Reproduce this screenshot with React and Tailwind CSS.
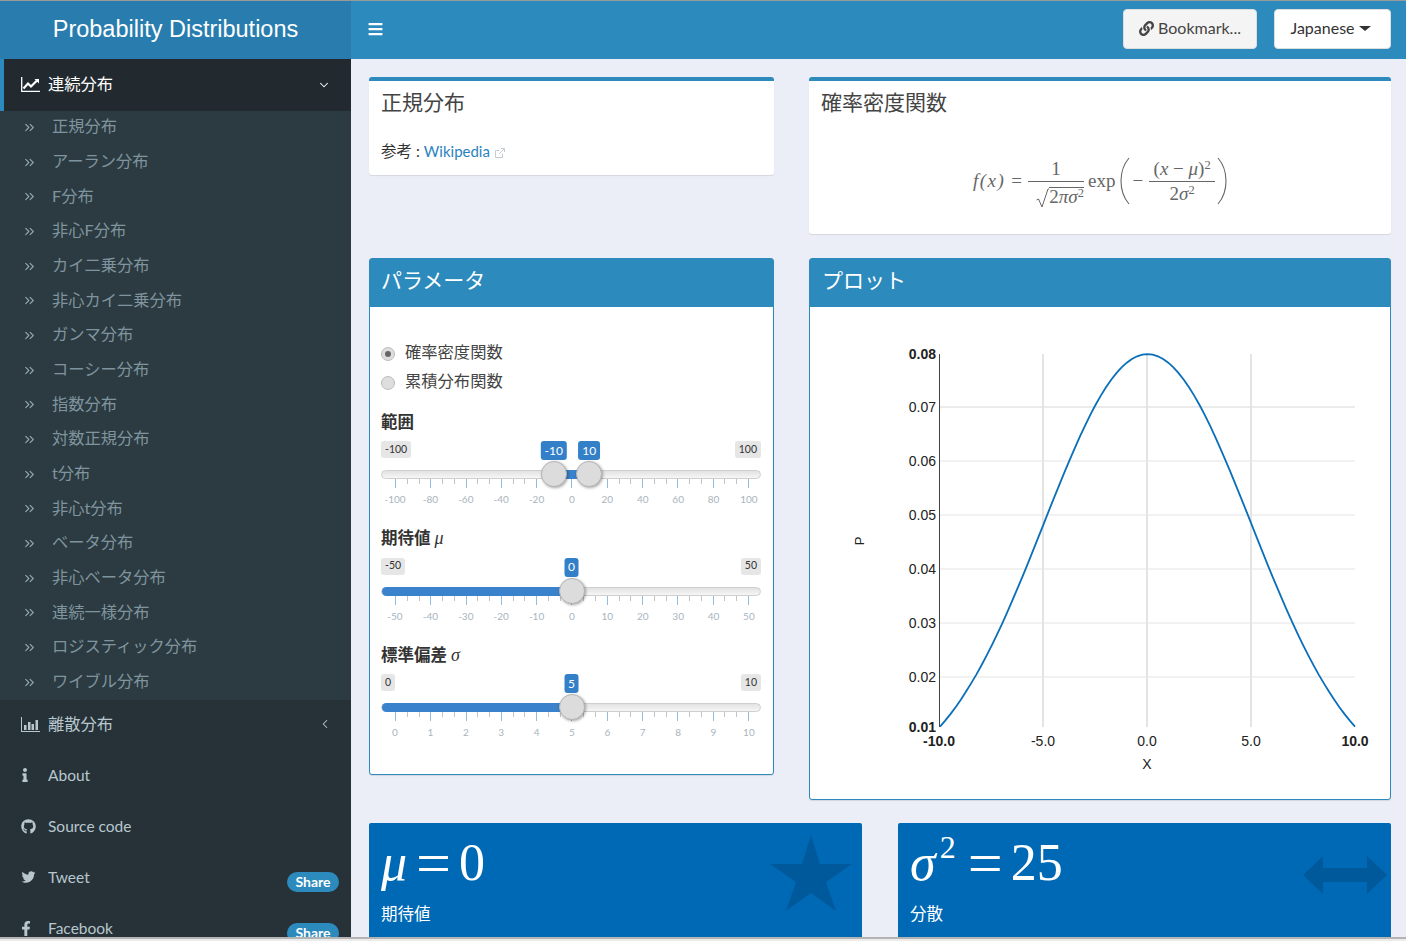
import { FaBars, FaFacebookF, FaGithub, FaInfo, FaLink, FaTwitter } from 'react-icons/fa';
import { ChevronDown, ChevronLeft, ChevronsRight } from 'lucide-react';

const distributions = [
  '正規分布', 'アーラン分布', 'F分布', '非心F分布', 'カイ二乗分布', '非心カイ二乗分布',
  'ガンマ分布', 'コーシー分布', '指数分布', '対数正規分布', 't分布', '非心t分布',
  'ベータ分布', '非心ベータ分布', '連続一様分布', 'ロジスティック分布', 'ワイブル分布',
];

function LineChartIcon() {
  return (
    <svg width="19" height="15" viewBox="0 0 19 15" fill="none" stroke="currentColor">
      <path d="M0.7 0v14.3H19" strokeWidth="1.3" />
      <path d="M2.5 11.5L7 6.5l3 3L16.5 3" strokeWidth="2.2" />
      <path d="M13.5 2h4.5v4.5z" fill="currentColor" stroke="none" />
    </svg>
  );
}

function BarChartIcon() {
  return (
    <svg width="19" height="15" viewBox="0 0 19 15" fill="currentColor">
      <path d="M0 0h1v14h18v1H0z" />
      <path d="M3 8h2.5v5H3zM7 5h2.5v8H7zM10.5 7H13v6h-2.5zM14.5 3H17v10h-2.5z" />
    </svg>
  );
}

function TreeItem({ label }) {
  return (
    <div className="h-[34.7px] flex items-center pl-[22px] pb-[4px] text-[#7f949e]">
      <ChevronsRight size={15} strokeWidth={1.8} className="mr-[15px] mt-[2px] shrink-0 text-[#93a8b2]" />
      <span className="text-[16.25px]">{label}</span>
    </div>
  );
}

function MenuItem({ icon, label, right, cjk }) {
  return (
    <div className={cjk ? 'h-[51px] flex items-center pl-[21px] pr-[12px] pb-[3px] text-[#b8c7ce]' : 'h-[51px] flex items-center pl-[21px] pr-[12px] pb-[1px] text-[#b8c7ce]'}>
      <span className="w-[27px] shrink-0">{icon}</span>
      <span className={cjk ? 'flex-1 text-[16.25px]' : 'flex-1 text-[15.5px]'}>{label}</span>
      {right}
    </div>
  );
}

function ShareBadge() {
  return (
    <span className="w-[52px] h-[20px] mt-[7px] rounded-full bg-[#2c8abd] text-white text-[14px] font-bold flex items-center justify-center">
      Share
    </span>
  );
}

function Sidebar() {
  return (
    <aside className="w-[351px] shrink-0 bg-[#263238] overflow-hidden">
      <div className="h-[52px] bg-[#222a30] border-l-4 border-[#2c8abd] flex items-center pl-[17px] pr-[20px] pb-[1px] text-white">
        <span className="w-[27px] shrink-0"><LineChartIcon /></span>
        <span className="flex-1 text-[16.25px]">連続分布</span>
        <ChevronDown size={14} strokeWidth={1.8} />
      </div>
      <div className="bg-[#2c3b41] h-[589px]">
        {distributions.map((d) => <TreeItem key={d} label={d} />)}
      </div>
      <MenuItem
        cjk
        icon={<BarChartIcon />}
        label="離散分布"
        right={<ChevronLeft size={14} strokeWidth={1.8} className="mr-[7px]" />}
      />
      <MenuItem icon={<FaInfo className="w-[8px] h-[14px] -mt-[2px]" />} label="About" />
      <MenuItem icon={<FaGithub className="w-[15px] h-[15px] -mt-[2px]" />} label="Source code" />
      <MenuItem icon={<FaTwitter className="w-[15px] h-[14px] -mt-[2px]" />} label="Tweet" right={<ShareBadge />} />
      <MenuItem icon={<FaFacebookF className="w-[10px] h-[15px] -mt-[2px]" />} label="Facebook" right={<ShareBadge />} />
    </aside>
  );
}

function Slider({ title, symbol, min, max, values, ticks }) {
  const span = max - min;
  const pos = (v) => 14 + ((v - min) / span) * 354;
  const fillLeft = values.length > 1 ? pos(values[0]) : 0;
  const fillRight = pos(values[values.length - 1]);
  return (
    <div className="mb-[21.5px]">
      <div className="h-6 mb-[7px] flex items-center text-[16.5px] font-bold text-[#333]">
        {title}
        {symbol && <i className="ml-[4px] text-[18px] font-normal font-['Liberation_Serif',serif]">{symbol}</i>}
      </div>
      <div className="relative h-[19px] mb-[10px] flex justify-between items-start text-[10.5px] text-[#333]">
        <span className="h-[17px] px-[4px] bg-[#e6e6e6] rounded-[3px] flex items-center">{min}</span>
        <span className="h-[17px] px-[4px] bg-[#e6e6e6] rounded-[3px] flex items-center">{max}</span>
        {values.map((v) => (
          <span
            key={v}
            className="absolute top-0 h-[19px] px-[4px] -translate-x-1/2 bg-[#3480c8] text-white rounded-[3px] flex items-center text-[12px]"
            style={{ left: pos(v) - 0.5 }}
          >
            {v}
          </span>
        ))}
      </div>
      <div className="relative h-[9px] rounded-full border border-[#cfcfcf] bg-gradient-to-b from-[#e2e2e2] to-[#f6f6f6]">
        <div
          className="absolute -inset-y-px bg-[#3a82cc] rounded-l-full"
          style={{ left: fillLeft, width: fillRight - fillLeft }}
        />
        {values.map((v) => (
          <div
            key={v}
            className="absolute top-[-10px] w-[26px] h-[26px] -translate-x-1/2 rounded-full bg-[#dcdcdc] border border-[#b5b5b5] shadow-[1px_1px_3px_rgba(0,0,0,0.35)]"
            style={{ left: pos(v) - 1.5 }}
          />
        ))}
      </div>
      <div className="h-[9px] ml-[14px] mr-[12px] flex justify-between items-start">
        {ticks.flatMap((t, i) => {
          const major = <span key={t} className="w-px h-[9px] bg-[#8fbce0]" />;
          if (i === ticks.length - 1) return [major];
          return [
            major,
            <span key={`${t}a`} className="w-px h-[5px] bg-[#c4c4c4]" />,
            <span key={`${t}b`} className="w-px h-[5px] bg-[#c4c4c4]" />,
          ];
        })}
      </div>
      <div className="mt-[5px] h-[12px] ml-[14px] mr-[12px] flex justify-between text-[10px] leading-[12px] text-[#a9b4be]">
        {ticks.map((t) => (
          <span key={t} className="w-0 flex justify-center">{t}</span>
        ))}
      </div>
    </div>
  );
}

function Radio({ label, checked }) {
  return (
    <div className="h-[29px] flex items-center text-[16.3px] text-[#444]">
      <span className="w-[14px] h-[14px] mt-[3px] mr-[10px] rounded-full bg-[#dedede] border border-[#bdbdbd] flex items-center justify-center">
        {checked && <span className="w-[6px] h-[6px] rounded-full bg-[#666]" />}
      </span>
      <span className="pb-[1px]">{label}</span>
    </div>
  );
}

function Paren({ flip }) {
  return (
    <svg width="10" height="48" viewBox="0 0 10 48" fill="none" stroke="#666" strokeWidth="1.1" className={flip ? '-scale-x-100' : ''}>
      <path d="M9 1C3 8 1 16 1 24s2 16 8 23" />
    </svg>
  );
}

function Formula() {
  return (
    <div className="h-[70px] mt-[32px] flex items-center justify-center text-[19px] text-[#666] font-['Liberation_Serif',serif]">
      <i className="tracking-[1.5px]">f(x)</i>
      <span className="mx-[6px]">=</span>
      <div className="flex flex-col items-center w-[56px]">
        <span className="h-[24px] leading-[24px]">1</span>
        <div className="w-full border-t border-[#666] flex justify-end items-start h-[24px]">
          <svg width="13" height="20" viewBox="0 0 13 20" fill="none" stroke="#666" className="mt-[6px] shrink-0">
            <path d="M0.5 12l2-1 3.5 8L12 1h1" strokeWidth="1" />
          </svg>
          <span className="mt-[5px] border-t border-[#666] leading-[18px] h-[19px] whitespace-nowrap">
            2<i>πσ</i><sup className="text-[12.5px]">2</sup>
          </span>
        </div>
      </div>
      <span className="ml-[4px] mr-[5px]">exp</span>
      <Paren />
      <span className="ml-[2px] mr-[6px]">−</span>
      <div className="flex flex-col items-center w-[66px]">
        <span className="h-[24px] leading-[24px] whitespace-nowrap">
          (<i>x</i> − <i>μ</i>)<sup className="text-[12.5px]">2</sup>
        </span>
        <span className="w-full border-t border-[#666] h-[24px] leading-[24px] text-center">
          2<i>σ</i><sup className="text-[12.5px]">2</sup>
        </span>
      </div>
      <span className="ml-[2px]"><Paren flip /></span>
    </div>
  );
}

const yTicks = [
  { v: '0.08', y: 354, bold: true },
  { v: '0.07', y: 407 },
  { v: '0.06', y: 461 },
  { v: '0.05', y: 515 },
  { v: '0.04', y: 569 },
  { v: '0.03', y: 623 },
  { v: '0.02', y: 677 },
  { v: '0.01', y: 727, bold: true },
];
const xTicks = [
  { v: '-10.0', x: 939, bold: true },
  { v: '-5.0', x: 1043 },
  { v: '0.0', x: 1147 },
  { v: '5.0', x: 1251 },
  { v: '10.0', x: 1355, bold: true },
];

function curvePath() {
  const pts = [];
  for (let x = -10; x <= 10.001; x += 0.25) {
    const p = Math.exp(-(x * x) / 50) / (Math.sqrt(2 * Math.PI) * 5);
    pts.push(`${(1147.5 + x * 20.75).toFixed(1)},${(407 - (p - 0.07) * 5400).toFixed(1)}`);
  }
  return `M${pts.join('L')}`;
}

function Plot() {
  return (
    <svg width="580" height="492" viewBox="810 307 580 492" className="font-['Liberation_Sans',sans-serif]">
      {yTicks.slice(1, 7).map((t) => (
        <line key={t.v} x1="940" x2="1355" y1={t.y} y2={t.y} stroke="#e4e4e4" strokeWidth={t.v === '0.07' ? 1.5 : 1} />
      ))}
      {[1043, 1147, 1251].map((x) => (
        <line key={x} x1={x} x2={x} y1="354" y2="727" stroke="#e4e4e4" strokeWidth="2" />
      ))}
      <line x1="939.5" x2="939.5" y1="354" y2="727" stroke="#444" />
      <path d={curvePath()} fill="none" stroke="#0a6fb8" strokeWidth="1.8" />
      {yTicks.map((t) => (
        <text key={t.v} x="936" y={t.y + 5} textAnchor="end" fontSize="14" fill="#222" fontWeight={t.bold ? 700 : 400}>{t.v}</text>
      ))}
      {xTicks.map((t) => (
        <text key={t.v} x={t.x} y="746" textAnchor="middle" fontSize="14" fill="#222" fontWeight={t.bold ? 700 : 400}>{t.v}</text>
      ))}
      <text x="1147" y="769" textAnchor="middle" fontSize="14" fill="#222">X</text>
      <text x="864" y="541" textAnchor="middle" fontSize="13" fill="#222" transform="rotate(-90 864 541)">P</text>
    </svg>
  );
}

function ValueBox({ label, icon, children }) {
  return (
    <div className="relative w-[493px] h-[130px] bg-[#0069b5] text-white rounded-t-[2px] pl-[12px] shrink-0">
      <div className="h-[76px] pt-[3px] flex items-center text-[52px] leading-none font-['Liberation_Serif',serif]">{children}</div>
      <div className="mt-[3px] text-[16.5px]">{label}</div>
      {icon}
    </div>
  );
}

export default function App() {
  return (
    <div className="w-[1406px] h-[941px] overflow-hidden flex flex-col bg-[#ebeef6] text-[#333] font-['Lato','Noto_Sans_CJK_JP',sans-serif]">
      <div className="h-px bg-[#9a9a9a] shrink-0" />
      <header className="h-[58px] shrink-0 flex bg-[#2c8abd]">
        <div className="w-[351px] bg-[#287dae] pb-[1px] flex items-center justify-center text-white text-[23.5px] font-['Liberation_Sans',sans-serif]">
          Probability Distributions
        </div>
        <div className="flex-1 flex items-center pl-[17px] pr-[15px] pb-[2px] text-[16px]">
          <FaBars className="w-[15px] h-[16px] text-white" />
          <button className="ml-auto w-[134px] h-[40px] pb-[2px] flex items-center justify-center bg-[#f4f4f4] border border-[#ddd] rounded-[4px] text-[#444]">
            <FaLink className="w-[15px] h-[15px] mr-[4px]" />
            Bookmark...
          </button>
          <button className="ml-[17px] w-[117px] h-[40px] pr-[4px] pb-[2px] flex items-center justify-center bg-white border border-[#ddd] rounded-[4px] text-[#333]">
            Japanese
            <span className="ml-[4px] border-x-[6px] border-x-transparent border-t-[5px] border-t-[#333]" />
          </button>
        </div>
      </header>

      <div className="flex-1 flex overflow-hidden">
        <Sidebar />
        <main className="flex-1 pl-[18px] pr-[15px] pt-[18px] overflow-hidden">
          <div className="flex gap-[35px] h-[181px]">
            <section className="w-[405px] h-[98px] bg-white border-t-4 border-[#2c8abd] rounded-[3px] shadow-[0_1px_1px_rgba(0,0,0,0.1)] px-[12px]">
              <h3 className="text-[21px] leading-[24px] pt-[9px] text-[#444]">正規分布</h3>
              <p className="mt-[26px] text-[15.5px] text-[#333] flex items-center">
                参考 :
                <span className="ml-[4px] text-[15px] text-[#2a83c0]">Wikipedia</span>
                <svg width="10" height="10" viewBox="0 0 10 10" fill="none" stroke="#c4ccd2" className="ml-[5px] mt-[2px]">
                  <path d="M7.5 5.5v4h-7v-7h4M4 6l5-5M6 .5h3.5V4" />
                </svg>
              </p>
            </section>
            <section className="w-[582px] h-[157px] bg-white border-t-4 border-[#2c8abd] rounded-[3px] shadow-[0_1px_1px_rgba(0,0,0,0.1)] px-[12px]">
              <h3 className="text-[21px] leading-[24px] pt-[9px] text-[#444]">確率密度関数</h3>
              <Formula />
            </section>
          </div>

          <div className="flex gap-[35px] h-[565px]">
            <section className="w-[405px] h-[517px] bg-white border border-[#2c8abd] rounded-[3px] shadow-[0_1px_1px_rgba(0,0,0,0.1)]">
              <h3 className="h-[48px] bg-[#2c8abd] text-white text-[21px] flex items-center px-[11px] pb-[7px]">パラメータ</h3>
              <div className="pl-[11px] pr-[12px] pt-[31px]">
                <div className="mb-[14px]">
                  <Radio label="確率密度関数" checked />
                  <Radio label="累積分布関数" />
                </div>
                <Slider title="範囲" min={-100} max={100} values={[-10, 10]} ticks={[-100, -80, -60, -40, -20, 0, 20, 40, 60, 80, 100]} />
                <Slider title="期待値" symbol="μ" min={-50} max={50} values={[0]} ticks={[-50, -40, -30, -20, -10, 0, 10, 20, 30, 40, 50]} />
                <Slider title="標準偏差" symbol="σ" min={0} max={10} values={[5]} ticks={[0, 1, 2, 3, 4, 5, 6, 7, 8, 9, 10]} />
              </div>
            </section>
            <section className="w-[582px] h-[542px] bg-white border border-[#2c8abd] rounded-[3px] shadow-[0_1px_1px_rgba(0,0,0,0.1)]">
              <h3 className="h-[48px] bg-[#2c8abd] text-white text-[21px] flex items-center px-[12px] pb-[7px]">プロット</h3>
              <Plot />
            </section>
          </div>

          <div className="flex gap-[36px]">
            <ValueBox
              label="期待値"
              icon={
                <svg width="82" height="76" viewBox="0 0 82 76" fill="#00599b" className="absolute right-[10px] top-[12px]">
                  <polygon points="41,0 50,29 82,29 56,47 66,76 41,58 16,76 26,47 0,29 32,29" />
                </svg>
              }
            >
              <i>μ</i>
              <span className="ml-[9px] mr-[8px] text-[62px]">=</span>
              <span>0</span>
            </ValueBox>
            <ValueBox
              label="分散"
              icon={
                <svg width="84" height="38" viewBox="0 0 84 38" fill="#00599b" className="absolute right-[4px] top-[33px]">
                  <polygon points="0,19 20,0 20,12 64,12 64,0 84,19 64,38 64,26 20,26 20,38" />
                </svg>
              }
            >
              <i>σ</i>
              <sup className="text-[32px] ml-[4px]">2</sup>
              <span className="ml-[12px] mr-[8px] text-[62px]">=</span>
              <span>25</span>
            </ValueBox>
          </div>
        </main>
      </div>
      <div className="h-[4px] shrink-0 bg-[#ececec] border-t-2 border-[#b4b4b4]" />
    </div>
  );
}
